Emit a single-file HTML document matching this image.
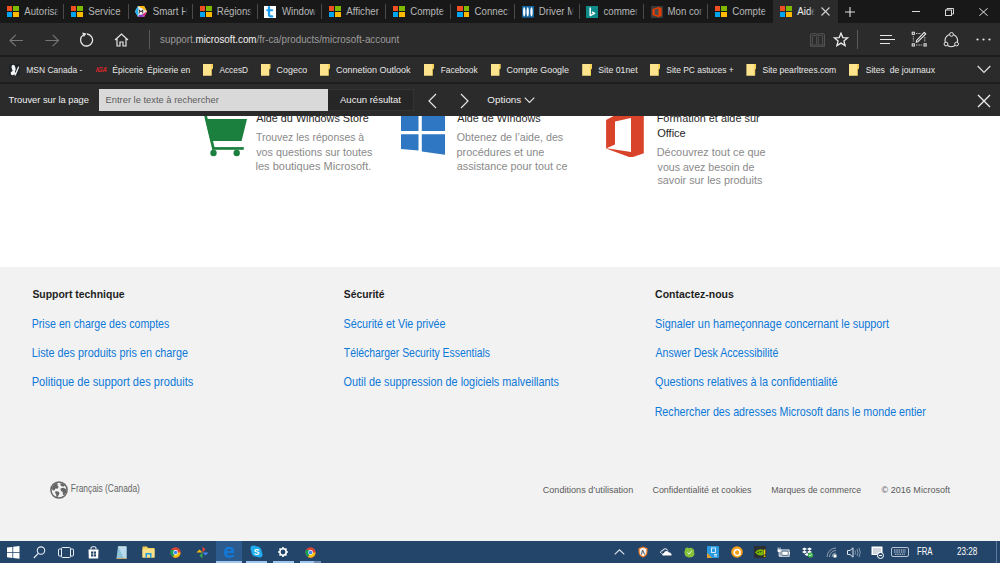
<!DOCTYPE html>
<html><head><meta charset="utf-8">
<style>
*{margin:0;padding:0;box-sizing:border-box}
html,body{width:1000px;height:563px;overflow:hidden;background:#fff;font-family:"Liberation Sans",sans-serif}
.a{position:absolute}
.t{position:absolute;white-space:pre;line-height:1}
#tabs{left:0;top:0;width:1000px;height:23px;background:#181818}
.tab{position:absolute;top:0;height:23px;width:64.4px}
.tab .sep{position:absolute;right:0;top:4px;width:1px;height:15px;background:#4a4a4a}
.tab .ic{position:absolute;left:6.5px;top:6px;width:12px;height:11px}
.tab .tx{position:absolute;left:24.5px;top:7px;width:34px;overflow:hidden;font-size:9.1px;color:#a8a8a8;white-space:pre;-webkit-mask-image:linear-gradient(90deg,#000 75%,transparent 100%)}
.ic svg{display:block}
.ms{display:grid;grid-template-columns:5.5px 5.5px;grid-template-rows:5px 5px;gap:1px}
.ms i{display:block}
#tool{left:0;top:23px;width:1000px;height:32px;background:#2b2b2b}
#line1{left:0;top:55px;width:1000px;height:2px;background:#1d1d1d}
#fav{left:0;top:57px;width:1000px;height:25px;background:#2b2b2b}
#line2{left:0;top:82px;width:1000px;height:2px;background:#1d1d1d}
#find{left:0;top:84px;width:1000px;height:32px;background:#2b2b2b}
.ft{font-size:8.5px;color:#e6e6e6;top:10px}
.fold{position:absolute;top:6.7px;width:10px;height:12px;background:linear-gradient(90deg,#fce38c 0,#fce38c 82%,#f6d25a 82%);clip-path:polygon(0 0,100% 0,100% 40%,88% 48%,88% 100%,0 100%)}
#content{left:0;top:116px;width:1000px;height:425px;background:#fff;overflow:hidden}
#footer{left:0;top:267px;width:1000px;height:274px;background:#f2f2f2}
.lk{font-size:10.75px;color:#0f78d4}
.hd{font-size:10.5px;font-weight:bold;color:#222}
.gr{font-size:10.7px;color:#8c8c8c}
.bl{font-size:8.9px;color:#5e5e5e}
#task{left:0;top:541px;width:1000px;height:22px;background:#24456a}
</style></head><body>

<!-- TAB BAR -->
<div id="tabs" class="a">
  <div class="tab" style="left:0"><div class="ic ms"><i style="background:#f25022"></i><i style="background:#7fba00"></i><i style="background:#00a4ef"></i><i style="background:#ffb900"></i></div><div class="sep"></div></div>
  <div class="tab" style="left:64.4px"><div class="ic ms"><i style="background:#f25022"></i><i style="background:#7fba00"></i><i style="background:#00a4ef"></i><i style="background:#ffb900"></i></div><div class="sep"></div></div>
  <div class="tab" style="left:128.8px"><div class="ic" style="left:6.4px"><svg width="12" height="11" viewBox="0 0 12 11"><polygon points="3,0 9,0 12,5.5 9,11 3,11 0,5.5" fill="#e8e8e8"/><polygon points="3,0 0,5.5 3,11 3.8,5.5" fill="#1fb0f0"/><polygon points="3,0 9,0 12,5.5 8,3" fill="#f7b500"/><polygon points="12,5.5 9,11 7.5,8" fill="#e5207a"/><polygon points="9,11 3,11 4,9 7.5,8" fill="#8e3fc0"/><circle cx="6" cy="5.5" r="3" fill="#f4f4f4"/><path d="M4.3 7.3 V3.8 L6 6 L7.7 3.8 V7.3" fill="none" stroke="#333" stroke-width="1"/></svg></div><div class="sep"></div></div>
  <div class="tab" style="left:193.2px"><div class="ic ms"><i style="background:#f25022"></i><i style="background:#7fba00"></i><i style="background:#00a4ef"></i><i style="background:#ffb900"></i></div><div class="sep"></div></div>
  <div class="tab" style="left:257.6px"><div class="ic" style="width:12px;height:12px;top:5.8px"><svg width="12" height="12" viewBox="0 0 12 12"><rect width="12" height="12" fill="#fff"/><path d="M5 1.2 V8.6 Q5 10.4 6.8 10.4 H8.2" fill="none" stroke="#1a9df0" stroke-width="2.3" stroke-linecap="round"/><path d="M3.2 4.2 H8.2" stroke="#1a9df0" stroke-width="2" stroke-linecap="round"/></svg></div><div class="sep"></div></div>
  <div class="tab" style="left:322px"><div class="ic ms"><i style="background:#f25022"></i><i style="background:#7fba00"></i><i style="background:#00a4ef"></i><i style="background:#ffb900"></i></div><div class="sep"></div></div>
  <div class="tab" style="left:386.4px"><div class="ic ms"><i style="background:#f25022"></i><i style="background:#7fba00"></i><i style="background:#00a4ef"></i><i style="background:#ffb900"></i></div><div class="sep"></div></div>
  <div class="tab" style="left:450.8px"><div class="ic ms"><i style="background:#f25022"></i><i style="background:#7fba00"></i><i style="background:#00a4ef"></i><i style="background:#ffb900"></i></div><div class="sep"></div></div>
  <div class="tab" style="left:515.2px"><div class="ic" style="width:12px;height:11.7px"><svg width="12" height="11.7" viewBox="0 0 12 11.7"><rect width="12" height="11.7" fill="#1464a0"/><ellipse cx="2.2" cy="5.85" rx="1.15" ry="4.6" fill="#fff"/><ellipse cx="5.7" cy="5.85" rx="1.15" ry="4.6" fill="#fff"/><ellipse cx="9.5" cy="5.85" rx="1.15" ry="4.6" fill="#fff"/></svg></div><div class="sep"></div></div>
  <div class="tab" style="left:579.6px"><div class="ic" style="width:12px;height:12px;left:6.3px;top:5.9px"><svg width="12" height="12" viewBox="0 0 12 12"><rect width="12" height="12" fill="#0e8a87"/><path d="M4.2 1.6 V9.6 L8.6 7.4 L6 6" fill="none" stroke="#fff" stroke-width="1.5" stroke-linejoin="round"/></svg></div><div class="sep"></div></div>
  <div class="tab" style="left:644px"><div class="ic" style="width:12px;height:12px;left:6.5px;top:5.9px"><svg width="12" height="12" viewBox="0 0 12 12"><rect width="12" height="12" fill="#3a3a3a"/><path d="M1.5 3 L7.5 1 L10.5 2 V10 L7.5 11 L1.5 9.2 Z" fill="#eb3c00"/><path d="M3.6 3.6 L7.5 2.6 V9.6 L3.6 8.6 Z" fill="#4a4a4a"/></svg></div><div class="sep"></div></div>
  <div class="tab" style="left:708.4px"><div class="ic ms"><i style="background:#f25022"></i><i style="background:#7fba00"></i><i style="background:#00a4ef"></i><i style="background:#ffb900"></i></div></div>
  <div class="tab" style="left:773px;width:64.5px;background:#2b2b2b"><div class="ic ms"><i style="background:#f25022"></i><i style="background:#7fba00"></i><i style="background:#00a4ef"></i><i style="background:#ffb900"></i></div>
    <svg class="a" style="left:47px;top:6px" width="11" height="11" viewBox="0 0 11 11"><path d="M1.5 1.5 L9.5 9.5 M9.5 1.5 L1.5 9.5" stroke="#d0d0d0" stroke-width="1.1"/></svg></div>
  <svg class="a" style="left:845px;top:7px" width="10" height="10" viewBox="0 0 10 10"><path d="M5 0 V10 M0 5 H10" stroke="#e0e0e0" stroke-width="1.1"/></svg>
  <div class="a" style="left:911.5px;top:11px;width:8.5px;height:1px;background:#d8d8d8"></div>
  <svg class="a" style="left:945px;top:8px" width="9" height="8" viewBox="0 0 9 8"><rect x="0.5" y="2" width="6" height="5.5" fill="none" stroke="#d8d8d8" stroke-width="1"/><path d="M2 2 V0.5 H8.5 V6 H6.5" fill="none" stroke="#d8d8d8" stroke-width="1"/></svg>
  <svg class="a" style="left:978.5px;top:8px" width="9" height="8" viewBox="0 0 9 8"><path d="M0.3 0.2 L8.7 7.8 M8.7 0.2 L0.3 7.8" stroke="#e0e0e0" stroke-width="1"/></svg>
</div>

<!-- TOOLBAR -->
<div id="tool" class="a">
  <svg class="a" style="left:9.3px;top:10.5px" width="15" height="13" viewBox="0 0 15 13"><path d="M14 6.5 H1.2 M6.8 0.8 L1 6.5 L6.8 12.2" fill="none" stroke="#777" stroke-width="1.1"/></svg>
  <svg class="a" style="left:44.5px;top:10.5px" width="15" height="13" viewBox="0 0 15 13"><path d="M0.5 6.5 H13.3 M7.7 0.8 L13.5 6.5 L7.7 12.2" fill="none" stroke="#777" stroke-width="1.1"/></svg>
  <svg class="a" style="left:79px;top:9px" width="16" height="15" viewBox="0 0 16 15"><path d="M4.2 3 A6 6 0 1 0 8 2" fill="none" stroke="#e6e6e6" stroke-width="1.3"/><path d="M3.2 0.6 L7.5 1.5 L4.8 5" fill="#e6e6e6"/></svg>
  <svg class="a" style="left:114px;top:10px" width="15" height="14" viewBox="0 0 15 14"><path d="M1 7 L7.5 1 L14 7 M3 5.5 V13 H6 V9 H9 V13 H12 V5.5" fill="none" stroke="#e6e6e6" stroke-width="1.2"/></svg>
  <div class="a" style="left:149px;top:7px;width:1px;height:19px;background:#5a5a5a"></div>
  <svg class="a" style="left:810px;top:10px" width="15" height="14" viewBox="0 0 15 14"><path d="M0.6 13.2 V2 Q0.6 0.7 2 0.7 H5.5 Q7.5 0.7 7.5 2.5 Q7.5 0.7 9.5 0.7 H13 Q14.4 0.7 14.4 2 V13.2 Z" fill="none" stroke="#555" stroke-width="1.1"/><path d="M2.6 11.5 V2.6 H5.8 Q6.6 2.6 6.6 3.4 V11.5 M8.4 11.5 V3.4 Q8.4 2.6 9.2 2.6 H12.4 V11.5 M0.6 12 H14.4" fill="none" stroke="#505050" stroke-width="1"/></svg>
  <svg class="a" style="left:833px;top:9px" width="16" height="15" viewBox="0 0 16 15"><path d="M8 1.2 L9.8 5.6 L14.4 5.9 L10.9 8.9 L12.1 13.6 L8 11.1 L3.9 13.6 L5.1 8.9 L1.6 5.9 L6.2 5.6 Z" fill="none" stroke="#ececec" stroke-width="1.3" stroke-linejoin="miter"/></svg>
  <div class="a" style="left:857px;top:7px;width:1px;height:19px;background:#5a5a5a"></div>
  <svg class="a" style="left:879px;top:10.7px" width="17" height="11" viewBox="0 0 17 11"><path d="M1 1.5 H13 M1 5.5 H16 M1 9.5 H11" stroke="#e6e6e6" stroke-width="1.1"/></svg>
  <svg class="a" style="left:911px;top:8px" width="16" height="16" viewBox="0 0 16 16"><rect x="1.2" y="1.2" width="2.2" height="2.2" fill="none" stroke="#e6e6e6" stroke-width="1"/><rect x="1.2" y="12.8" width="2.2" height="2.2" fill="none" stroke="#e6e6e6" stroke-width="1"/><rect x="13" y="12.8" width="2.2" height="2.2" fill="none" stroke="#e6e6e6" stroke-width="1"/><path d="M5 2.5 H10 M2.3 5.3 V10.5 M5 14 H11.5 M13.8 6 V11" stroke="#d8d8d8" stroke-width="0.9" stroke-dasharray="1 0.6"/><path d="M13.2 1.3 L14.8 2.9 L7 10.7 L5.2 11.3 L5.7 9.4 Z" fill="none" stroke="#ececec" stroke-width="1.1" stroke-linejoin="round"/></svg>
  <svg class="a" style="left:943px;top:8px" width="17" height="17" viewBox="0 0 17 17"><circle cx="8.3" cy="9.5" r="6.3" fill="none" stroke="#e6e6e6" stroke-width="1.1"/><circle cx="8.5" cy="3.4" r="1.9" fill="#2b2b2b" stroke="#e6e6e6" stroke-width="1"/><circle cx="3" cy="13" r="1.9" fill="#2b2b2b" stroke="#e6e6e6" stroke-width="1"/><circle cx="13.6" cy="13" r="1.9" fill="#2b2b2b" stroke="#e6e6e6" stroke-width="1"/></svg>
  <svg class="a" style="left:976px;top:15px" width="16" height="3" viewBox="0 0 16 3"><circle cx="1.5" cy="1.5" r="1.1" fill="#e6e6e6"/><circle cx="7.5" cy="1.5" r="1.1" fill="#e6e6e6"/><circle cx="13.5" cy="1.5" r="1.1" fill="#e6e6e6"/></svg>
</div>
<div id="line1" class="a"></div>

<!-- FAVORITES -->
<div id="fav" class="a">
  <svg class="a" style="left:9px;top:6.6px" width="11.2" height="12" viewBox="0 0 11.2 12"><rect width="11.2" height="12" fill="#1f2428"/><ellipse cx="4.6" cy="4.1" rx="1.9" ry="3.3" fill="#f4f4f4" transform="rotate(-12 4.6 4.1)"/><ellipse cx="4" cy="9" rx="2.4" ry="2" fill="#f4f4f4" transform="rotate(-30 4 9)"/><path d="M9.5 3.2 L6.2 11" stroke="#e8e8e8" stroke-width="1.4" stroke-linecap="round"/><path d="M4.8 7 L6.5 10.5" stroke="#f4f4f4" stroke-width="1.3"/></svg>
  <svg class="a" style="left:94px;top:8.5px" width="14" height="7" viewBox="0 0 14 7"><text x="1.8" y="6.2" font-family="Liberation Sans" font-weight="bold" font-size="7.2" fill="#e8262a" textLength="10.8" lengthAdjust="spacingAndGlyphs" transform="skewX(-18) translate(1.5 0)">IGA</text></svg>
  <div class="fold" style="left:203px"></div>
  <div class="fold" style="left:260.5px"></div>
  <div class="fold" style="left:320px"></div>
  <div class="fold" style="left:424px"></div>
  <div class="fold" style="left:490.7px"></div>
  <div class="fold" style="left:582.2px"></div>
  <div class="fold" style="left:650px"></div>
  <div class="fold" style="left:746.4px"></div>
  <div class="fold" style="left:849px"></div>
  <svg class="a" style="left:977px;top:8px" width="14" height="9" viewBox="0 0 14 9"><path d="M0.7 1 L7 7.5 L13.3 1" fill="none" stroke="#e0e0e0" stroke-width="1.2"/></svg>
</div>
<div id="line2" class="a"></div>

<!-- FIND BAR -->
<div id="find" class="a">
  <div class="a" style="left:99px;top:5px;width:229px;height:21.5px;background:#d9d9d9"></div>
  <div class="a" style="left:328px;top:4.5px;width:85.5px;height:22px;background:#262626;border:1px solid #333;border-left:none"></div>
  <svg class="a" style="left:426px;top:8.5px" width="12" height="16" viewBox="0 0 12 16"><path d="M10 1 L3 8 L10 15" fill="none" stroke="#e6e6e6" stroke-width="1.2"/></svg>
  <svg class="a" style="left:459px;top:8.5px" width="12" height="16" viewBox="0 0 12 16"><path d="M2 1 L9 8 L2 15" fill="none" stroke="#e6e6e6" stroke-width="1.2"/></svg>
  <svg class="a" style="left:524px;top:12.5px" width="11" height="7" viewBox="0 0 11 7"><path d="M0.7 0.7 L5.5 5.5 L10.3 0.7" fill="none" stroke="#e6e6e6" stroke-width="1.1"/></svg>
  <svg class="a" style="left:977px;top:9.5px" width="14" height="14" viewBox="0 0 14 14"><path d="M1 1 L13 13 M13 1 L1 13" stroke="#f0f0f0" stroke-width="1.3"/></svg>
</div>

<!-- CONTENT -->
<div id="content" class="a">
  <!-- cart -->
  <svg class="a" style="left:200px;top:-4px" width="50" height="45" viewBox="200 112 50 45">
    <path d="M202.8 110 L205.6 110 L214.8 148.5 L212 148.5 Z" fill="#1b7f3d"/>
    <polygon points="205.2,118.9 247,118.9 241.6,140.9 210.5,140.9" fill="#1b7f3d"/>
    <rect x="212" y="147.1" width="31.8" height="2.7" fill="#1b7f3d"/>
    <circle cx="213.5" cy="153" r="3.2" fill="#1b7f3d"/>
    <circle cx="236.7" cy="153" r="3.2" fill="#1b7f3d"/>
  </svg>
  <!-- windows -->
  <svg class="a" style="left:395px;top:-4px" width="55" height="45" viewBox="395 112 55 45">
    <polygon points="401,114 418.5,112 418.5,131.1 401,131.1" fill="#2f77c2"/>
    <polygon points="421.8,111.5 445,109 445,131.1 421.8,131.1" fill="#2f77c2"/>
    <polygon points="401,134.2 418.5,134.2 418.5,150.6 401,148.9" fill="#2f77c2"/>
    <polygon points="421.8,134.2 445,134.2 445,154.8 421.8,151.5" fill="#2f77c2"/>
  </svg>
  <!-- office -->
  <svg class="a" style="left:600px;top:-4px" width="50" height="45" viewBox="600 112 50 45">
    <path d="M606.1 120 L621 112 L643.8 112 L643.8 153.3 L631 157.7 L606.1 148.4 Z M615 121.6 L631 118 L631 152 L606.5 148.2 L615 144.4 Z" fill="#d9432a" fill-rule="evenodd"/>
  </svg>
</div>

<!-- FOOTER -->
<div id="footer" class="a">



  <svg class="a" style="left:49.7px;top:213.7px" width="18" height="18" viewBox="0 0 18 18"><circle cx="9" cy="9" r="8.1" fill="none" stroke="#666" stroke-width="1.5"/><path d="M2.2 6 Q3.5 3 6.5 2 L8 2.8 L7.2 4.2 L8.6 5.6 L7.6 7.8 L5.4 7.6 L4.6 9.2 L3 9.6 L2 8.2 Z" fill="#666"/><path d="M5.6 10.2 L8.4 10.4 L9.6 12.2 L8.4 14.4 L7.4 16.6 L6.4 16.2 L6.2 13.4 L5 11.8 Z" fill="#666"/><path d="M10.2 2.2 L13.2 2.8 L15 4.6 L13.6 5.6 L11.4 5.2 L10.4 3.8 Z" fill="#666"/><path d="M10.4 7.4 L13.4 6.8 L16.4 8.2 L16 11.6 L14.2 14.2 L12.8 13.6 L12.8 11 L11 10 Z" fill="#666"/></svg>

</div>

<!-- TASKBAR -->
<div id="task" class="a">
  <svg class="a" style="left:7px;top:5px" width="13" height="13" viewBox="0 0 13 13"><path d="M0 1.6 L5.4 0.9 V6 H0 Z M6.2 0.8 L12.5 0 V6 H6.2 Z M0 6.8 H5.4 V11.9 L0 11.2 Z M6.2 6.8 H12.5 V12.8 L6.2 12 Z" fill="#fff"/></svg>
  <svg class="a" style="left:33px;top:5px" width="13" height="13" viewBox="0 0 13 13"><circle cx="8" cy="4.6" r="3.7" fill="none" stroke="#e8eef5" stroke-width="1.1"/><path d="M5.3 7.3 L0.8 12" stroke="#e8eef5" stroke-width="1.2"/></svg>
  <svg class="a" style="left:58px;top:6px" width="16" height="11" viewBox="0 0 16 11"><rect x="3.5" y="0.5" width="9" height="10" rx="1" fill="none" stroke="#e8eef5" stroke-width="1"/><path d="M3.5 2 H1.2 Q0.5 2 0.5 2.8 V8.2 Q0.5 9 1.2 9 H3.5 M12.5 2 H14.8 Q15.5 2 15.5 2.8 V8.2 Q15.5 9 14.8 9 H12.5" fill="none" stroke="#e8eef5" stroke-width="1"/></svg>
  <svg class="a" style="left:88px;top:4.5px" width="11" height="13" viewBox="0 0 11 13"><path d="M3 3.5 V2 Q3 0.8 4.2 0.8 H6.8 Q8 0.8 8 2 V3.5" fill="none" stroke="#fff" stroke-width="1"/><path d="M0.5 3.5 H10.5 L10.2 12.5 H0.8 Z" fill="#fff"/><rect x="3" y="5.5" width="2.2" height="2.2" fill="#24456a"/><rect x="5.8" y="5.5" width="2.2" height="2.2" fill="#24456a"/><rect x="3" y="8.3" width="2.2" height="2.2" fill="#24456a"/><rect x="5.8" y="8.3" width="2.2" height="2.2" fill="#24456a"/></svg>
  <svg class="a" style="left:115px;top:5px" width="12" height="13" viewBox="0 0 12 13"><path d="M3 0.5 H11.5 V12.5 H1.5 Z" fill="#8fc3d8"/><path d="M3 0.5 H11.5 V12.5 H9 Z" fill="#b8dceb"/><path d="M4 0 V2 M6 0 V2 M8 0 V2 M10 0 V2" stroke="#e0e0e0" stroke-width="0.7"/><path d="M1.5 12.5 H11.5" stroke="#c9a86a" stroke-width="1"/></svg>
  <svg class="a" style="left:141.5px;top:5px" width="13" height="12" viewBox="0 0 13 12"><path d="M0.5 0.5 H5 L6 2 H12.5 V11.5 H0.5 Z" fill="#f6cf57"/><rect x="0.5" y="3" width="12" height="8.5" fill="#fbe08c"/><path d="M3.5 11.5 V7 H9.5 V11.5 H8 V8.5 H5 V11.5 Z" fill="#1c9be0"/></svg>
  <svg class="a" style="left:169.5px;top:5.5px" width="11" height="11" viewBox="0 0 12 12"><circle cx="6" cy="6" r="5.6" fill="#db4437"/><path d="M6 6 L11.6 6 A5.6 5.6 0 0 1 3.2 10.85 Z" fill="#f4c20d"/><path d="M6 6 L3.2 10.85 A5.6 5.6 0 0 1 1.15 3.2 L6 3.2 Z" fill="#0f9d58"/><circle cx="6" cy="6" r="2.6" fill="#fff"/><circle cx="6" cy="6" r="2" fill="#4285f4"/></svg>
  <svg class="a" style="left:196px;top:5px" width="13" height="13" viewBox="0 0 13 13"><path d="M6.5 6.5 L6.5 0.5 L9.5 3.5 Z" fill="#ea4335"/><path d="M6.5 6.5 L12.5 6.5 L9.5 9.5 Z" fill="#4285f4"/><path d="M6.5 6.5 L6.5 12.5 L3.5 9.5 Z" fill="#34a853"/><path d="M6.5 6.5 L0.5 6.5 L3.5 3.5 Z" fill="#fbbc05"/></svg>
  <div class="a" style="left:216px;top:0;width:26px;height:22px;background:#2c5a8c"></div>
  <div class="a" style="left:216px;top:20px;width:26px;height:2px;background:#9fc7ee"></div>
  <svg class="a" style="left:223px;top:5px" width="12" height="12" viewBox="0 0 12 12"><path d="M1 6.5 Q1 0.8 6.2 0.8 Q11.2 0.8 11.2 6 V7 H3.6 Q4 9.5 6.5 9.5 Q8.8 9.5 10.8 8.4 V10.8 Q8.8 11.8 6.3 11.8 Q1 11.8 1 6.5 Z M3.7 5 H8.6 Q8.4 3 6.1 3 Q4 3 3.7 5 Z" fill="#1279d8" fill-rule="evenodd"/></svg>
  <svg class="a" style="left:249.5px;top:4px" width="13" height="13" viewBox="0 0 13 13"><circle cx="3.5" cy="3.5" r="3" fill="#1eaef0"/><circle cx="9.5" cy="9.5" r="3" fill="#1eaef0"/><circle cx="6.5" cy="6.5" r="5.2" fill="#1eaef0"/><text x="6.5" y="9.6" font-size="8.5" font-weight="bold" text-anchor="middle" fill="#fff" font-family="Liberation Sans">S</text></svg>
  <div class="a" style="left:246px;top:20px;width:20.5px;height:2px;background:#9fc7ee"></div>
  <svg class="a" style="left:278px;top:6px" width="10" height="10" viewBox="0 0 10 10"><circle cx="5" cy="5" r="3.2" fill="none" stroke="#fff" stroke-width="1.6"/><path d="M5 0 V2 M5 8 V10 M0 5 H2 M8 5 H10 M1.5 1.5 L2.9 2.9 M7.1 7.1 L8.5 8.5 M8.5 1.5 L7.1 2.9 M2.9 7.1 L1.5 8.5" stroke="#fff" stroke-width="1.6"/></svg>
  <div class="a" style="left:273px;top:20px;width:20.5px;height:2px;background:#9fc7ee"></div>
  <svg class="a" style="left:304.5px;top:5.5px" width="11" height="11" viewBox="0 0 12 12"><circle cx="6" cy="6" r="5.6" fill="#db4437"/><path d="M6 6 L11.6 6 A5.6 5.6 0 0 1 3.2 10.85 Z" fill="#f4c20d"/><path d="M6 6 L3.2 10.85 A5.6 5.6 0 0 1 1.15 3.2 L6 3.2 Z" fill="#0f9d58"/><circle cx="6" cy="6" r="2.6" fill="#fff"/><circle cx="6" cy="6" r="2" fill="#4285f4"/></svg>
  <div class="a" style="left:300px;top:20px;width:14.2px;height:2px;background:#9fc7ee"></div>
  <div class="a" style="left:314.2px;top:20px;width:6.8px;height:2px;background:#6f8fb0"></div>

  <svg class="a" style="left:614px;top:8px" width="11" height="6" viewBox="0 0 11 6"><path d="M0.7 5.3 L5.5 0.8 L10.3 5.3" fill="none" stroke="#dfe6ee" stroke-width="1.1"/></svg>
  <svg class="a" style="left:637.5px;top:5px" width="10" height="12" viewBox="0 0 10 12"><path d="M5 0.5 L9.5 2.2 V6 Q9.5 9.5 5 11.5 Q0.5 9.5 0.5 6 V2.2 Z" fill="#f07a22"/><path d="M5 1.8 L8.3 3 V6 Q8.3 8.8 5 10.2 Q1.7 8.8 1.7 6 V3 Z" fill="#f2f2f2"/><path d="M3.5 8.5 L4.5 4 L5.5 6 L6.5 8.5" fill="none" stroke="#555" stroke-width="1"/></svg>
  <svg class="a" style="left:660px;top:6.5px" width="12" height="8" viewBox="0 0 12 8"><path d="M1.5 5.5 Q0.2 5 0.8 3.5 Q1.5 2.5 2.5 3 Q3 0.5 5.5 0.8 Q7.2 1 7.8 2.6" fill="none" stroke="#fff" stroke-width="1"/><path d="M3 7.6 Q1.8 7.4 2.2 6 Q2.6 5 3.8 5.2 Q4.4 3 6.6 3 Q8.4 3 9 4.6 Q10.4 4.3 11 5.5 Q12 6.2 11.5 7.2 Q11.2 7.6 10.5 7.6 Z" fill="#fff"/></svg>
  <svg class="a" style="left:684px;top:5.5px" width="11" height="11" viewBox="0 0 11 11"><path d="M2 1 Q3.5 0 5 1.2 Q7 0.2 8.5 1.5 Q10.8 2.5 10 5 Q11 7 9.8 8.5 Q9 10.8 6.5 10.2 Q4.5 11 3 9.8 Q0.5 9.5 0.8 7 Q-0.2 5 1 3.5 Q0.8 1.8 2 1 Z" fill="#85c13a"/><path d="M3.5 5.8 L4.8 7 L7.5 4.2" fill="none" stroke="#fff" stroke-width="1"/></svg>
  <svg class="a" style="left:707px;top:5px" width="12" height="12" viewBox="0 0 12 12"><rect x="0" y="0" width="12" height="12" rx="1" fill="#2a9be0"/><path d="M0 12 L0 7 Q3 9 5 12 Z" fill="#e0a030"/><rect x="4.5" y="2" width="4" height="4.5" fill="none" stroke="#fff" stroke-width="0.8"/><path d="M7 8.5 H10 M7 10 H10" stroke="#fff" stroke-width="0.8"/></svg>
  <svg class="a" style="left:730.5px;top:5px" width="12" height="12" viewBox="0 0 12 12"><circle cx="6" cy="6" r="5.8" fill="#f7a11a"/><path d="M8.6 8.2 A3 3 0 1 1 8.9 5.2 V9" fill="none" stroke="#fff" stroke-width="1.6"/></svg>
  <svg class="a" style="left:754px;top:5px" width="12" height="12" viewBox="0 0 12 12"><rect x="0" y="0" width="12" height="12" rx="1" fill="#2b2f33"/><path d="M1 6.5 Q4.5 1.5 9.5 4 V9 Q4.5 10.5 1 6.5 Z" fill="#76b900"/><path d="M3 6.5 Q5.5 4 8 5.5 Q5.5 8.5 3 6.5 Z" fill="#2b2f33"/><circle cx="5.6" cy="6.3" r="1" fill="#76b900"/><rect x="9.8" y="3.5" width="1.5" height="5" fill="#f5d000"/><rect x="9.8" y="9.5" width="1.5" height="1.5" fill="#f5d000"/></svg>
  <svg class="a" style="left:776.5px;top:5.5px" width="13" height="10" viewBox="0 0 13 10"><path d="M1.2 0.5 V2.2 M3 0.5 V2.2" stroke="#fff" stroke-width="0.8"/><path d="M0.5 2.2 H3.8 V4 Q3.8 5.2 2.2 5.2 Q0.5 5.2 0.5 4 Z" fill="#fff"/><path d="M2.2 5.2 V9.2 H4" fill="none" stroke="#fff" stroke-width="1"/><rect x="4" y="3" width="8" height="6.2" fill="none" stroke="#fff" stroke-width="1"/><rect x="5.2" y="4.5" width="5.6" height="3.4" fill="#fff"/><rect x="12" y="5" width="0.9" height="2.4" fill="#fff"/></svg>
  <svg class="a" style="left:801.5px;top:5.5px" width="12" height="11" viewBox="0 0 12 11"><path d="M2.5 0.5 L5 2 L2.5 3.5 L0 2 Z M7.5 0.5 L10 2 L7.5 3.5 L5 2 Z M0 5 L2.5 3.5 L5 5 L2.5 6.5 Z M5 5 L7.5 3.5 L10 5 L7.5 6.5 Z M2.5 7.5 L5 6 L7.5 7.5 L5 9 Z" fill="#fff"/><circle cx="8.5" cy="8" r="2.6" fill="#3cb44a"/><path d="M7.2 8 L8.2 9 L9.8 7.2" fill="none" stroke="#fff" stroke-width="0.8"/></svg>
  <svg class="a" style="left:825.5px;top:6px" width="11" height="11" viewBox="0 0 11 11"><path d="M1 10 A9 9 0 0 1 10 1 M3.5 10 A6.5 6.5 0 0 1 10 3.5 M6 10 A4 4 0 0 1 10 6" fill="none" stroke="#9aa9ba" stroke-width="0.9"/><rect x="7.5" y="7.5" width="3" height="3" fill="#fff"/></svg>
  <svg class="a" style="left:847px;top:6px" width="14" height="11" viewBox="0 0 14 11"><path d="M0.5 3.5 H3 L6 0.8 V10.2 L3 7.5 H0.5 Z" fill="none" stroke="#dde4ec" stroke-width="1"/><path d="M8 3.5 Q9 5.5 8 7.5 M10 2 Q12 5.5 10 9 M12 0.8 Q14.5 5.5 12 10.2" fill="none" stroke="#8da0b5" stroke-width="0.9"/></svg>
  <svg class="a" style="left:870.5px;top:5px" width="13" height="13" viewBox="0 0 13 13"><path d="M0.5 0.5 H11.5 V9 H8 L6 11 V9 H0.5 Z" fill="#fff"/><path d="M2 3 H10 M2 5 H10 M2 7 H7" stroke="#8a9aad" stroke-width="0.8"/><circle cx="9.5" cy="9.5" r="3" fill="#24456a" stroke="#fff" stroke-width="1"/><path d="M8 9.5 H11" stroke="#fff" stroke-width="1"/></svg>
  <svg class="a" style="left:891px;top:6px" width="18" height="10" viewBox="0 0 18 10"><rect x="0.5" y="0.5" width="17" height="9" rx="1.5" fill="none" stroke="#b8c4d2" stroke-width="1"/><path d="M3 3 H15 M3 5 H15 M4 7.2 H14" stroke="#dfe6ee" stroke-width="0.9" stroke-dasharray="1.5 0.8"/></svg>
  <div class="a" style="left:996px;top:0;width:1px;height:22px;background:#5f7a99"></div>
</div>

<svg class="a" style="left:0;top:0;pointer-events:none;white-space:pre" width="1000" height="563" viewBox="0 0 1000 563" font-family="Liberation Sans, sans-serif"><defs><linearGradient id="g0" gradientUnits="userSpaceOnUse" x1="55.5" y1="0" x2="59.5" y2="0"><stop offset="0" stop-color="#bababa"/><stop offset="1" stop-color="#1a1a1a" stop-opacity="0"/></linearGradient><linearGradient id="g1" gradientUnits="userSpaceOnUse" x1="119.9" y1="0" x2="123.9" y2="0"><stop offset="0" stop-color="#bababa"/><stop offset="1" stop-color="#1a1a1a" stop-opacity="0"/></linearGradient><linearGradient id="g2" gradientUnits="userSpaceOnUse" x1="184.3" y1="0" x2="188.3" y2="0"><stop offset="0" stop-color="#bababa"/><stop offset="1" stop-color="#1a1a1a" stop-opacity="0"/></linearGradient><linearGradient id="g3" gradientUnits="userSpaceOnUse" x1="248.7" y1="0" x2="252.7" y2="0"><stop offset="0" stop-color="#bababa"/><stop offset="1" stop-color="#1a1a1a" stop-opacity="0"/></linearGradient><linearGradient id="g4" gradientUnits="userSpaceOnUse" x1="313.1" y1="0" x2="317.1" y2="0"><stop offset="0" stop-color="#bababa"/><stop offset="1" stop-color="#1a1a1a" stop-opacity="0"/></linearGradient><linearGradient id="g5" gradientUnits="userSpaceOnUse" x1="377.5" y1="0" x2="381.5" y2="0"><stop offset="0" stop-color="#bababa"/><stop offset="1" stop-color="#1a1a1a" stop-opacity="0"/></linearGradient><linearGradient id="g6" gradientUnits="userSpaceOnUse" x1="441.9" y1="0" x2="445.9" y2="0"><stop offset="0" stop-color="#bababa"/><stop offset="1" stop-color="#1a1a1a" stop-opacity="0"/></linearGradient><linearGradient id="g7" gradientUnits="userSpaceOnUse" x1="506.3" y1="0" x2="510.3" y2="0"><stop offset="0" stop-color="#bababa"/><stop offset="1" stop-color="#1a1a1a" stop-opacity="0"/></linearGradient><linearGradient id="g8" gradientUnits="userSpaceOnUse" x1="570.7" y1="0" x2="574.7" y2="0"><stop offset="0" stop-color="#bababa"/><stop offset="1" stop-color="#1a1a1a" stop-opacity="0"/></linearGradient><linearGradient id="g9" gradientUnits="userSpaceOnUse" x1="635.1" y1="0" x2="639.1" y2="0"><stop offset="0" stop-color="#bababa"/><stop offset="1" stop-color="#1a1a1a" stop-opacity="0"/></linearGradient><linearGradient id="g10" gradientUnits="userSpaceOnUse" x1="699.5" y1="0" x2="703.5" y2="0"><stop offset="0" stop-color="#bababa"/><stop offset="1" stop-color="#1a1a1a" stop-opacity="0"/></linearGradient><linearGradient id="g11" gradientUnits="userSpaceOnUse" x1="763.9" y1="0" x2="767.9" y2="0"><stop offset="0" stop-color="#bababa"/><stop offset="1" stop-color="#1a1a1a" stop-opacity="0"/></linearGradient><linearGradient id="ga" gradientUnits="userSpaceOnUse" x1="809.0" y1="0" x2="815.0" y2="0"><stop offset="0" stop-color="#f0f0f0"/><stop offset="1" stop-color="#f0f0f0" stop-opacity="0"/></linearGradient></defs><text x="26.32" y="73.30" font-size="9.45" fill="#e8e8e8" textLength="56.04" lengthAdjust="spacingAndGlyphs">MSN Canada -</text>
<text x="112.31" y="73.30" font-size="9.45" fill="#e8e8e8" textLength="31.00" lengthAdjust="spacingAndGlyphs">Épicerie</text>
<text x="147.11" y="73.30" font-size="9.45" fill="#e8e8e8" textLength="43.17" lengthAdjust="spacingAndGlyphs">Épicerie en</text>
<text x="219.40" y="73.30" font-size="9.45" fill="#e8e8e8" textLength="28.65" lengthAdjust="spacingAndGlyphs">AccesD</text>
<text x="276.55" y="73.30" font-size="9.45" fill="#e8e8e8" textLength="30.77" lengthAdjust="spacingAndGlyphs">Cogeco</text>
<text x="335.95" y="73.30" font-size="9.45" fill="#e8e8e8" textLength="74.46" lengthAdjust="spacingAndGlyphs">Connetion Outlook</text>
<text x="440.63" y="73.30" font-size="9.45" fill="#e8e8e8" textLength="36.99" lengthAdjust="spacingAndGlyphs">Facebook</text>
<text x="506.55" y="73.30" font-size="9.45" fill="#e8e8e8" textLength="62.47" lengthAdjust="spacingAndGlyphs">Compte Google</text>
<text x="598.25" y="73.30" font-size="9.45" fill="#e8e8e8" textLength="39.33" lengthAdjust="spacingAndGlyphs">Site 01net</text>
<text x="666.26" y="73.30" font-size="9.45" fill="#e8e8e8" textLength="67.51" lengthAdjust="spacingAndGlyphs">Site PC astuces +</text>
<text x="762.46" y="73.30" font-size="9.45" fill="#e8e8e8" textLength="73.78" lengthAdjust="spacingAndGlyphs">Site pearltrees.com</text>
<text x="865.65" y="73.30" font-size="9.45" fill="#e8e8e8" textLength="69.33" lengthAdjust="spacingAndGlyphs">Sites  de journaux</text>
<text x="8.61" y="102.90" font-size="9.88" fill="#f0f0f0" textLength="80.32" lengthAdjust="spacingAndGlyphs">Trouver sur la page</text>
<text x="105.55" y="102.90" font-size="9.88" fill="#5c5c5c" textLength="113.32" lengthAdjust="spacingAndGlyphs">Entrer le texte à rechercher</text>
<text x="340.00" y="103.20" font-size="9.88" fill="#f0f0f0" textLength="60.98" lengthAdjust="spacingAndGlyphs">Aucun résultat</text>
<text x="487.31" y="103.20" font-size="9.88" fill="#f0f0f0" textLength="33.99" lengthAdjust="spacingAndGlyphs">Options</text>
<text x="256.20" y="122.10" font-size="11.34" fill="#262626" textLength="112.49" lengthAdjust="spacingAndGlyphs">Aide du Windows Store</text>
<text x="255.99" y="141.30" font-size="11.34" fill="#8a8a8a" textLength="108.17" lengthAdjust="spacingAndGlyphs">Trouvez les réponses à</text>
<text x="256.20" y="155.60" font-size="11.34" fill="#8a8a8a" textLength="116.32" lengthAdjust="spacingAndGlyphs">vos questions sur toutes</text>
<text x="255.54" y="169.90" font-size="11.34" fill="#8a8a8a" textLength="115.73" lengthAdjust="spacingAndGlyphs">les boutiques Microsoft.</text>
<text x="457.20" y="122.10" font-size="11.34" fill="#262626" textLength="83.52" lengthAdjust="spacingAndGlyphs">Aide de Windows</text>
<text x="456.77" y="141.30" font-size="11.34" fill="#8a8a8a" textLength="106.45" lengthAdjust="spacingAndGlyphs">Obtenez de l’aide, des</text>
<text x="456.55" y="155.60" font-size="11.34" fill="#8a8a8a" textLength="87.75" lengthAdjust="spacingAndGlyphs">procédures et une</text>
<text x="456.77" y="169.90" font-size="11.34" fill="#8a8a8a" textLength="110.62" lengthAdjust="spacingAndGlyphs">assistance pour tout ce</text>
<text x="656.73" y="122.40" font-size="11.34" fill="#262626" textLength="102.91" lengthAdjust="spacingAndGlyphs">Formation et aide sur</text>
<text x="657.16" y="137.00" font-size="11.34" fill="#262626" textLength="28.54" lengthAdjust="spacingAndGlyphs">Office</text>
<text x="656.73" y="156.10" font-size="11.34" fill="#8a8a8a" textLength="108.96" lengthAdjust="spacingAndGlyphs">Découvrez tout ce que</text>
<text x="657.60" y="170.50" font-size="11.34" fill="#8a8a8a" textLength="96.78" lengthAdjust="spacingAndGlyphs">vous avez besoin de</text>
<text x="657.38" y="184.30" font-size="11.34" fill="#8a8a8a" textLength="104.94" lengthAdjust="spacingAndGlyphs">savoir sur les produits</text>
<text x="32.39" y="298.20" font-size="11.63" fill="#1e1e1e" font-weight="bold" textLength="92.18" lengthAdjust="spacingAndGlyphs">Support technique</text>
<text x="343.79" y="298.20" font-size="11.63" fill="#1e1e1e" font-weight="bold" textLength="40.78" lengthAdjust="spacingAndGlyphs">Sécurité</text>
<text x="655.08" y="298.20" font-size="11.63" fill="#1e1e1e" font-weight="bold" textLength="78.80" lengthAdjust="spacingAndGlyphs">Contactez-nous</text>
<text x="31.75" y="327.60" font-size="11.92" fill="#0c78d8" textLength="137.57" lengthAdjust="spacingAndGlyphs">Prise en charge des comptes</text>
<text x="31.74" y="357.00" font-size="11.92" fill="#0c78d8" textLength="156.26" lengthAdjust="spacingAndGlyphs">Liste des produits pris en charge</text>
<text x="31.71" y="386.40" font-size="11.92" fill="#0c78d8" textLength="161.62" lengthAdjust="spacingAndGlyphs">Politique de support des produits</text>
<text x="343.57" y="327.60" font-size="11.92" fill="#0c78d8" textLength="101.92" lengthAdjust="spacingAndGlyphs">Sécurité et Vie privée</text>
<text x="343.79" y="357.00" font-size="11.92" fill="#0c78d8" textLength="146.22" lengthAdjust="spacingAndGlyphs">Télécharger Security Essentials</text>
<text x="343.57" y="386.40" font-size="11.92" fill="#0c78d8" textLength="215.46" lengthAdjust="spacingAndGlyphs">Outil de suppression de logiciels malveillants</text>
<text x="655.07" y="327.60" font-size="11.92" fill="#0c78d8" textLength="233.91" lengthAdjust="spacingAndGlyphs">Signaler un hameçonnage concernant le support</text>
<text x="655.50" y="357.00" font-size="11.92" fill="#0c78d8" textLength="122.88" lengthAdjust="spacingAndGlyphs">Answer Desk Accessibilité</text>
<text x="655.07" y="386.40" font-size="11.92" fill="#0c78d8" textLength="182.53" lengthAdjust="spacingAndGlyphs">Questions relatives à la confidentialité</text>
<text x="654.64" y="415.80" font-size="11.92" fill="#0c78d8" textLength="271.20" lengthAdjust="spacingAndGlyphs">Rechercher des adresses Microsoft dans le monde entier</text>
<text x="70.83" y="491.90" font-size="10.03" fill="#666666" textLength="69.01" lengthAdjust="spacingAndGlyphs">Français (Canada)</text>
<text x="542.75" y="492.70" font-size="9.59" fill="#5a5a5a" textLength="90.47" lengthAdjust="spacingAndGlyphs">Conditions d’utilisation</text>
<text x="652.45" y="492.70" font-size="9.59" fill="#5a5a5a" textLength="99.11" lengthAdjust="spacingAndGlyphs">Confidentialité et cookies</text>
<text x="771.30" y="492.70" font-size="9.59" fill="#5a5a5a" textLength="89.82" lengthAdjust="spacingAndGlyphs">Marques de commerce</text>
<text x="881.61" y="492.70" font-size="9.59" fill="#5a5a5a" textLength="68.37" lengthAdjust="spacingAndGlyphs">© 2016 Microsoft</text>
<text x="916.98" y="555.00" font-size="10.17" fill="#ffffff" textLength="15.60" lengthAdjust="spacingAndGlyphs">FRA</text>
<text x="957.09" y="555.00" font-size="10.17" fill="#ffffff" textLength="20.30" lengthAdjust="spacingAndGlyphs">23:28</text>
<text x="160.10" y="43.1" font-size="10.17" fill="#9c9c9c" textLength="35.42" lengthAdjust="spacingAndGlyphs">support.</text>
<text x="195.52" y="43.1" font-size="10.17" fill="#f2f2f2" textLength="61.00" lengthAdjust="spacingAndGlyphs">microsoft.com</text>
<text x="256.51" y="43.1" font-size="10.17" fill="#9c9c9c" textLength="142.71" lengthAdjust="spacingAndGlyphs">/fr-ca/products/microsoft-account</text>
<text x="24.30" y="15.4" font-size="10.17" fill="url(#g0)" textLength="51.04" lengthAdjust="spacingAndGlyphs">Autorisation</text>
<text x="88.31" y="15.4" font-size="10.17" fill="url(#g1)" textLength="38.13" lengthAdjust="spacingAndGlyphs">Service ·</text>
<text x="152.71" y="15.4" font-size="10.17" fill="url(#g2)" textLength="54.25" lengthAdjust="spacingAndGlyphs">Smart Home</text>
<text x="216.73" y="15.4" font-size="10.17" fill="url(#g3)" textLength="35.46" lengthAdjust="spacingAndGlyphs">Régions</text>
<text x="281.90" y="15.4" font-size="10.17" fill="url(#g4)" textLength="39.21" lengthAdjust="spacingAndGlyphs">Windows</text>
<text x="346.30" y="15.4" font-size="10.17" fill="url(#g5)" textLength="32.59" lengthAdjust="spacingAndGlyphs">Afficher</text>
<text x="410.22" y="15.4" font-size="10.17" fill="url(#g6)" textLength="33.84" lengthAdjust="spacingAndGlyphs">Compte</text>
<text x="474.62" y="15.4" font-size="10.17" fill="url(#g7)" textLength="46.75" lengthAdjust="spacingAndGlyphs">Connected</text>
<text x="538.73" y="15.4" font-size="10.17" fill="url(#g8)" textLength="46.72" lengthAdjust="spacingAndGlyphs">Driver Max</text>
<text x="603.51" y="15.4" font-size="10.17" fill="url(#g9)" textLength="60.70" lengthAdjust="spacingAndGlyphs">commentaires</text>
<text x="667.53" y="15.4" font-size="10.17" fill="url(#g10)" textLength="53.18" lengthAdjust="spacingAndGlyphs">Mon compte</text>
<text x="732.22" y="15.4" font-size="10.17" fill="url(#g11)" textLength="33.84" lengthAdjust="spacingAndGlyphs">Compte</text>
<text x="797.30" y="15.4" font-size="10.17" fill="url(#ga)" textLength="19.35" lengthAdjust="spacingAndGlyphs">Aide</text></svg>
</body></html>
